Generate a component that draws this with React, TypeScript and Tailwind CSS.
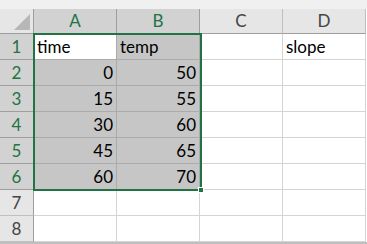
import React from 'react';

const COLS = ['A', 'B', 'C', 'D'];
const ROWS: (string | number)[][] = [
  ['time', 'temp', '', 'slope'],
  [0, 50, '', ''],
  [15, 55, '', ''],
  [30, 60, '', ''],
  [45, 65, '', ''],
  [60, 70, '', ''],
  ['', '', '', ''],
  ['', '', '', ''],
];

export default function App() {
  return (
    <div
      className="w-[367px] h-[244px] bg-white overflow-hidden relative text-[17px] text-black"
      style={{ fontFamily: 'Lato, "Liberation Sans", sans-serif' }}
    >
      {/* top strip */}
      <div className="h-[9px] bg-[#f0f0f0]" />

      <div className="grid grid-cols-[34px_83px_83px_83px_83px] grid-rows-[25px_repeat(8,26px)]">
        {/* corner */}
        <div className="bg-[#e6e6e6] border-r border-b border-[#9e9e9e] relative">
          <div className="absolute right-[3px] bottom-[3px] w-0 h-0 border-l-[16px] border-l-transparent border-b-[16px] border-b-[#b7b7b7]" />
        </div>
        {COLS.map((c, i) => {
          const sel = i < 2;
          return (
            <div
              key={c}
              className={
                sel
                  ? 'bg-[#d2d2d2] text-[#217346] border-r border-[#9e9e9e] border-b border-b-[#217346] flex items-center justify-center text-[17px]'
                  : 'bg-[#e6e6e6] text-[#444] border-r border-[#bfbfbf] border-b border-b-[#9e9e9e] flex items-center justify-center text-[17px]'
              }
            >
              {c}
            </div>
          );
        })}

        {ROWS.map((row, r) => {
          const selRow = r < 6;
          return (
            <React.Fragment key={r}>
              <div
                className={
                  selRow
                    ? 'bg-[#d2d2d2] text-[#217346] border-b border-[#9e9e9e] border-r border-r-[#217346] flex items-center justify-center text-[17px]'
                    : 'bg-[#e6e6e6] text-[#444] border-b border-[#bfbfbf] border-r border-r-[#9e9e9e] flex items-center justify-center text-[17px]'
                }
              >
                {r + 1}
              </div>
              {row.map((v, c) => {
                const inSel = selRow && c < 2;
                const active = r === 0 && c === 0;
                const bg = active ? 'bg-white' : inSel ? 'bg-[#c6c6c6]' : 'bg-white';
                const border = inSel ? 'border-[#ababab]' : 'border-[#d4d4d4]';
                const num = typeof v === 'number';
                return (
                  <div
                    key={c}
                    className={`${bg} ${border} border-r border-b flex items-center pt-[1px] px-[3px] ${num ? 'justify-end' : 'justify-start'}`}
                  >
                    {v}
                  </div>
                );
              })}
            </React.Fragment>
          );
        })}
      </div>

      {/* selection border */}
      <div className="absolute left-[33px] top-[33px] w-[169px] h-[158px] border-2 border-[#217346] pointer-events-none" />
      {/* fill handle */}
      <div className="absolute left-[198px] top-[187px] w-[6px] h-[6px] bg-[#217346] border border-white" />

      {/* bottom strip */}
      <div className="absolute left-0 right-0 bottom-0 h-[2px] bg-[#bfbfbf]" />
    </div>
  );
}
